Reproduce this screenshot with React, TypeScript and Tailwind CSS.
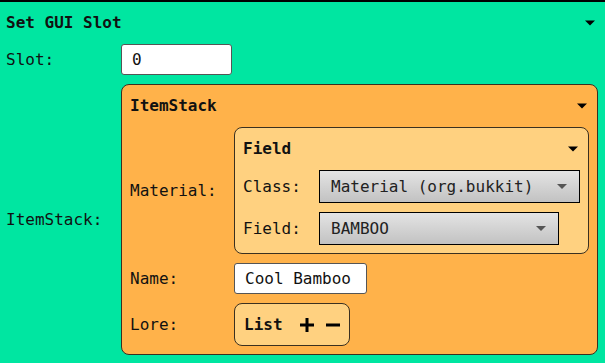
import React from "react";

function Caret() {
  return (
    <svg width="12" height="6" viewBox="0 0 12 6" className="mr-[1px] shrink-0">
      <polygon points="1,0.5 11,0.5 6,5.5" fill="#000" />
    </svg>
  );
}

function SelectCaret() {
  return (
    <svg width="10" height="5" viewBox="0 0 10 5" className="shrink-0">
      <polygon points="0,0 10,0 5,5" fill="#555" />
    </svg>
  );
}

function Header({ title }: { title: string }) {
  return (
    <div className="flex items-center justify-between pt-[10px] mb-[10px] h-[32px] leading-[22px] font-bold">
      <span>{title}</span>
      <Caret />
    </div>
  );
}

function Select({ value, width }: { value: string; width: string }) {
  return (
    <div
      className={`${width} h-[33px] border border-black bg-gradient-to-b from-[#e4e4e4] to-[#c2c2c2] flex items-center justify-between pl-[11px] pr-[12px] text-[#222]`}
    >
      <span>{value}</span>
      <SelectCaret />
    </div>
  );
}

export default function App() {
  return (
    <div className="min-h-screen bg-[#00E6A1] border-t-2 border-black pl-[6px] pr-[8px] text-[16px] text-[#111] font-['DejaVu_Sans_Mono',monospace]">
      <Header title="Set GUI Slot" />
      <div className="grid grid-cols-[115px_1fr] gap-y-[9px] items-center">
        <span>Slot:</span>
        <input
          readOnly
          defaultValue="0"
          className="w-[111px] h-[31px] bg-white border border-[#555] rounded-[3px] pl-[10px] outline-none"
        />
        <span>ItemStack:</span>
        <div className="bg-[#FFB24A] border border-[#3a3020] rounded-[8px] px-[8px] pb-[8px]">
          <Header title="ItemStack" />
          <div className="grid grid-cols-[104px_1fr] gap-y-[9px] items-center">
            <span>Material:</span>
            <div className="bg-[#FFD180] border border-[#3a3020] rounded-[8px] px-[8px] pb-[8px]">
              <Header title="Field" />
              <div className="grid grid-cols-[76px_1fr] gap-y-[9px] items-center">
                <span>Class:</span>
                <Select value="Material (org.bukkit)" width="w-[261px]" />
                <span>Field:</span>
                <Select value="BAMBOO" width="w-[240px]" />
              </div>
            </div>
            <span>Name:</span>
            <input
              readOnly
              defaultValue="Cool Bamboo"
              className="w-[133px] h-[31px] bg-white border border-[#555] rounded-[3px] pl-[10px] outline-none text-[#111]"
            />
            <span>Lore:</span>
            <div className="w-[116px] h-[43px] bg-[#FFD180] border border-[#3a3020] rounded-[8px] flex items-center pl-[9px]">
              <span className="font-bold">List</span>
              <svg width="14" height="14" viewBox="0 0 14 14" className="ml-[17px]">
                <rect x="0" y="5.5" width="14" height="3" fill="#000" />
                <rect x="5.5" y="0" width="3" height="14" fill="#000" />
              </svg>
              <svg width="14" height="14" viewBox="0 0 14 14" className="ml-[12px]">
                <rect x="0" y="5.5" width="14" height="3" fill="#000" />
              </svg>
            </div>
          </div>
        </div>
      </div>
    </div>
  );
}
